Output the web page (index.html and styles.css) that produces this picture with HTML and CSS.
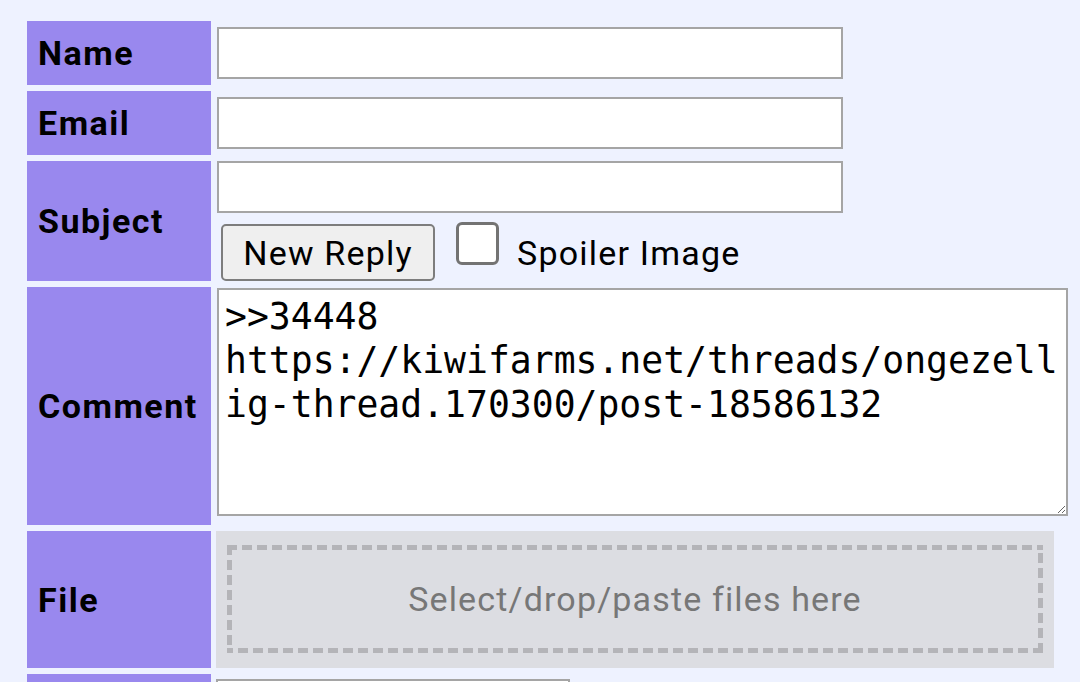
FILE: index.html
```html
<!DOCTYPE html>
<html>
<head>
  <title>New Reply</title>
  <meta charset="UTF-8">
  <meta name="viewport" content="width=device-width, initial-scale=1.0">
  <link rel="stylesheet" href="styles.css">
</head>
<body>
  <form class="post-form">
    <table class="post-table">
      <tr>
        <th>Name</th>
        <td><input type="text" class="field" name="name"></td>
      </tr>
      <tr>
        <th>Email</th>
        <td><input type="text" class="field" name="email"></td>
      </tr>
      <tr>
        <th>Subject</th>
        <td>
          <input type="text" class="field field-block" name="subject">
          <div class="submit-line">
            <button type="button" class="submit-btn">New Reply</button>
            <label class="spoiler">
              <input type="checkbox" class="spoiler-box">
              <span>Spoiler Image</span>
            </label>
          </div>
        </td>
      </tr>
      <tr>
        <th>Comment</th>
        <td>
          <textarea class="comment" name="body">&gt;&gt;34448
https://kiwifarms.net/threads/ongezellig-thread.170300/post-18586132</textarea>
        </td>
      </tr>
      <tr>
        <th>File</th>
        <td>
          <div class="dropzone-wrap">
            <div class="dropzone">Select/drop/paste files here</div>
          </div>
        </td>
      </tr>
      <tr>
        <th>Password</th>
        <td class="cell-top"><input type="password" class="field field-short" name="password"></td>
      </tr>
    </table>
  </form>
</body>
</html>
```

FILE: styles.css
```css
body {
  margin: 0;
  background: #eef2ff;
  font-family: Roboto, "Liberation Sans", sans-serif;
  color: #000;
}
.post-form {
  padding: 15px 0 0 22px;
}
.post-table {
  border-spacing: 5px 6px;
}
.post-table th {
  width: 173px;
  background: #9988ee;
  text-align: left;
  font-size: 34px;
  font-weight: 700;
  letter-spacing: 1.5px;
  line-height: 44px;
  padding: 10px 0 10px 11px;
  vertical-align: middle;
}
.post-table td {
  padding: 0;
  vertical-align: middle;
}
.post-table td.cell-top {
  vertical-align: top;
}
.field {
  box-sizing: border-box;
  width: 626px;
  height: 52px;
  margin: 0 0 0 1px;
  border: 2px solid #a5a5a5;
  background: #fff;
  font-size: 32px;
  font-family: inherit;
  padding: 0 6px;
}
.field-block {
  display: block;
}
.field-short {
  display: block;
  width: 354px;
  margin: 5px 0 0 0;
}
.submit-line {
  display: flex;
  align-items: center;
  margin-top: 11px;
  font-size: 34px;
  letter-spacing: 1.2px;
}
.submit-btn {
  box-sizing: border-box;
  height: 57px;
  width: 214px;
  margin-left: 5px;
  padding: 0;
  background: #efefef;
  border: 2px solid #7d7d7d;
  border-radius: 5px;
  font-family: inherit;
  font-size: 34px;
  letter-spacing: 1.2px;
  color: #000;
}
.spoiler {
  display: flex;
  align-items: center;
  align-self: stretch;
}
.spoiler-box {
  appearance: none;
  -webkit-appearance: none;
  box-sizing: border-box;
  width: 43px;
  height: 43px;
  margin: -2px 18px 0 21px;
  align-self: flex-start;
  border: 3px solid #737373;
  border-radius: 6px;
  background: #fff;
}
.comment {
  display: block;
  box-sizing: border-box;
  width: 851px;
  height: 228px;
  margin: 1px 0 9px 1px;
  padding: 5px 4px 5px 6px;
  border: 2px solid #a5a5a5;
  background: #fff;
  font-family: "DejaVu Sans Mono", "Liberation Mono", monospace;
  font-size: 36.4px;
  line-height: 44px;
  color: #000;
}
.dropzone-wrap {
  width: 838px;
  box-sizing: border-box;
  background: #dcdde2;
  padding: 14px 11px 15px 11px;
}
/* dashed frame drawn with gradients so the dash length matches */
.dropzone {
  box-sizing: border-box;
  height: 108px;
  display: flex;
  align-items: center;
  justify-content: center;
  font-size: 34px;
  letter-spacing: 1.15px;
  color: #777;
  background:
    repeating-linear-gradient(90deg, #b4b4b8 0 10px, transparent 10px 15px) top left / 100% 5px no-repeat,
    repeating-linear-gradient(270deg, #b4b4b8 0 10px, transparent 10px 15px) bottom right / 100% 5px no-repeat,
    repeating-linear-gradient(180deg, #b4b4b8 0 10px, transparent 10px 15px) top left / 5px 100% no-repeat,
    repeating-linear-gradient(0deg, #b4b4b8 0 10px, transparent 10px 15px) bottom right / 5px 100% no-repeat;
}
```
